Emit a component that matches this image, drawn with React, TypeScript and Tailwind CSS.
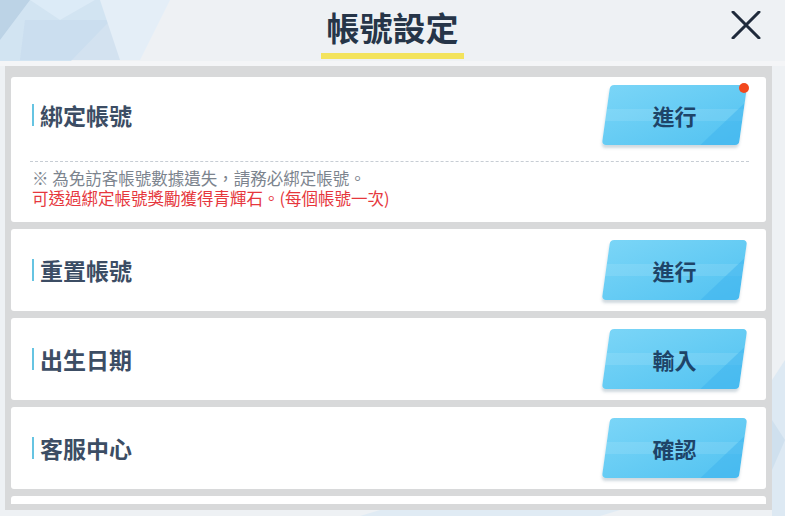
import React from 'react';

type Row = { title: string; action: string };

const rows: Row[] = [
  { title: '重置帳號', action: '進行' },
  { title: '出生日期', action: '輸入' },
  { title: '客服中心', action: '確認' },
];

function Backdrop() {
  return (
    <svg className="pointer-events-none absolute inset-0" width="785" height="516" viewBox="0 0 785 516">
      <polygon points="0,0 130,0 70,62 0,62" fill="#d2e4f2" />
      <polygon points="0,0 30,0 0,40" fill="#bcd3e6" />
      <polygon points="30,0 95,0 60,20" fill="#dcebf7" />
      <polygon points="25,20 120,20 140,60 20,60" fill="#c8dcee" opacity="0.7" />
      <polygon points="100,0 170,0 140,60 120,60" fill="#e4eef7" />
      <polygon points="772,380 785,360 785,516 772,516" fill="#dde9f3" />
      <polygon points="772,420 785,440 772,470" fill="#cfe0ee" />
      <polygon points="380,510 620,510 600,516 360,516" fill="#e0ebf4" />
    </svg>
  );
}

function ActionButton({ label, dot }: { label: string; dot?: boolean }) {
  return (
    <div className="relative flex h-[60px] w-[137px] shrink-0 items-center justify-center">
      <div className="absolute inset-0 skew-x-[-8deg] overflow-hidden rounded-[4px] bg-gradient-to-br from-[#7ad5f7] via-[#66ccf4] to-[#52c2f1] shadow-[0_3px_3px_rgba(40,80,110,0.22)]">
        <div className="absolute inset-x-0 top-[24px] h-[12px] bg-white/10" />
        <div className="absolute inset-0 bg-[#3fb5ef] [clip-path:polygon(72%_100%,100%_30%,100%_100%)] opacity-55" />
      </div>
      <span className="relative text-[22px] font-bold text-[#1e4468]">{label}</span>
      {dot && <span className="absolute right-[-6px] top-[-2px] h-[10px] w-[10px] rounded-full bg-[#f2481d]" />}
    </div>
  );
}

function Title({ text }: { text: string }) {
  return (
    <div className="flex items-center gap-[6px]">
      <span className="h-[22px] w-[2px] bg-[#66c4e2]" />
      <span className="text-[23px] font-bold text-[#3c4d64]">{text}</span>
    </div>
  );
}

export default function App() {
  return (
    <div className="relative h-[516px] w-[785px] overflow-hidden bg-[#eef1f4] font-['Noto_Sans_CJK_TC','Noto_Sans',sans-serif]">
      <Backdrop />

      <header className="relative flex h-[66px] flex-col items-center border-b-[5px] border-[#f4f5f7] pt-[6px]">
        <h1 className="text-[33px] font-bold leading-[42px] text-[#263548]">帳號設定</h1>
        <div className="mt-[5px] h-[6px] w-[143px] bg-[#f3e35c]" />
        <button className="absolute right-[24px] top-[11px]">
          <svg width="30" height="28" viewBox="0 0 30 28">
            <path d="M2 1 L28 27 M28 1 L2 27" stroke="#1f2a3b" strokeWidth="3" strokeLinecap="round" />
          </svg>
        </button>
      </header>

      <div className="relative mx-[5px] h-[444px] w-[767px] bg-[#d8d9da] px-[6px] pt-[11px] pb-[6px]">
        <div className="flex h-full flex-col gap-[7px] overflow-hidden">
          <div className="h-[145px] shrink-0 rounded-[3px] bg-white pl-[21px] pr-[23px] pt-[8px]">
            <div className="flex h-[60px] items-center justify-between">
              <Title text="綁定帳號" />
              <ActionButton label="進行" dot />
            </div>
            <div className="ml-[-2px] mr-[-6px] mt-[16px] border-t border-dashed border-[#c7cdd4]" />
            <div className="mt-[6px] flex flex-col text-[16.5px] leading-[20px]">
              <p className="text-[#7c848e]">※ 為免訪客帳號數據遺失，請務必綁定帳號。</p>
              <p className="text-[#e6373d]">可透過綁定帳號獎勵獲得青輝石。(每個帳號一次)</p>
            </div>
          </div>

          {rows.map((row) => (
            <div
              key={row.title}
              className="flex h-[82px] shrink-0 items-center justify-between rounded-[3px] bg-white pl-[21px] pr-[23px]"
            >
              <Title text={row.title} />
              <ActionButton label={row.action} />
            </div>
          ))}

          <div className="h-[82px] shrink-0 rounded-[3px] bg-white" />
        </div>
      </div>
    </div>
  );
}
